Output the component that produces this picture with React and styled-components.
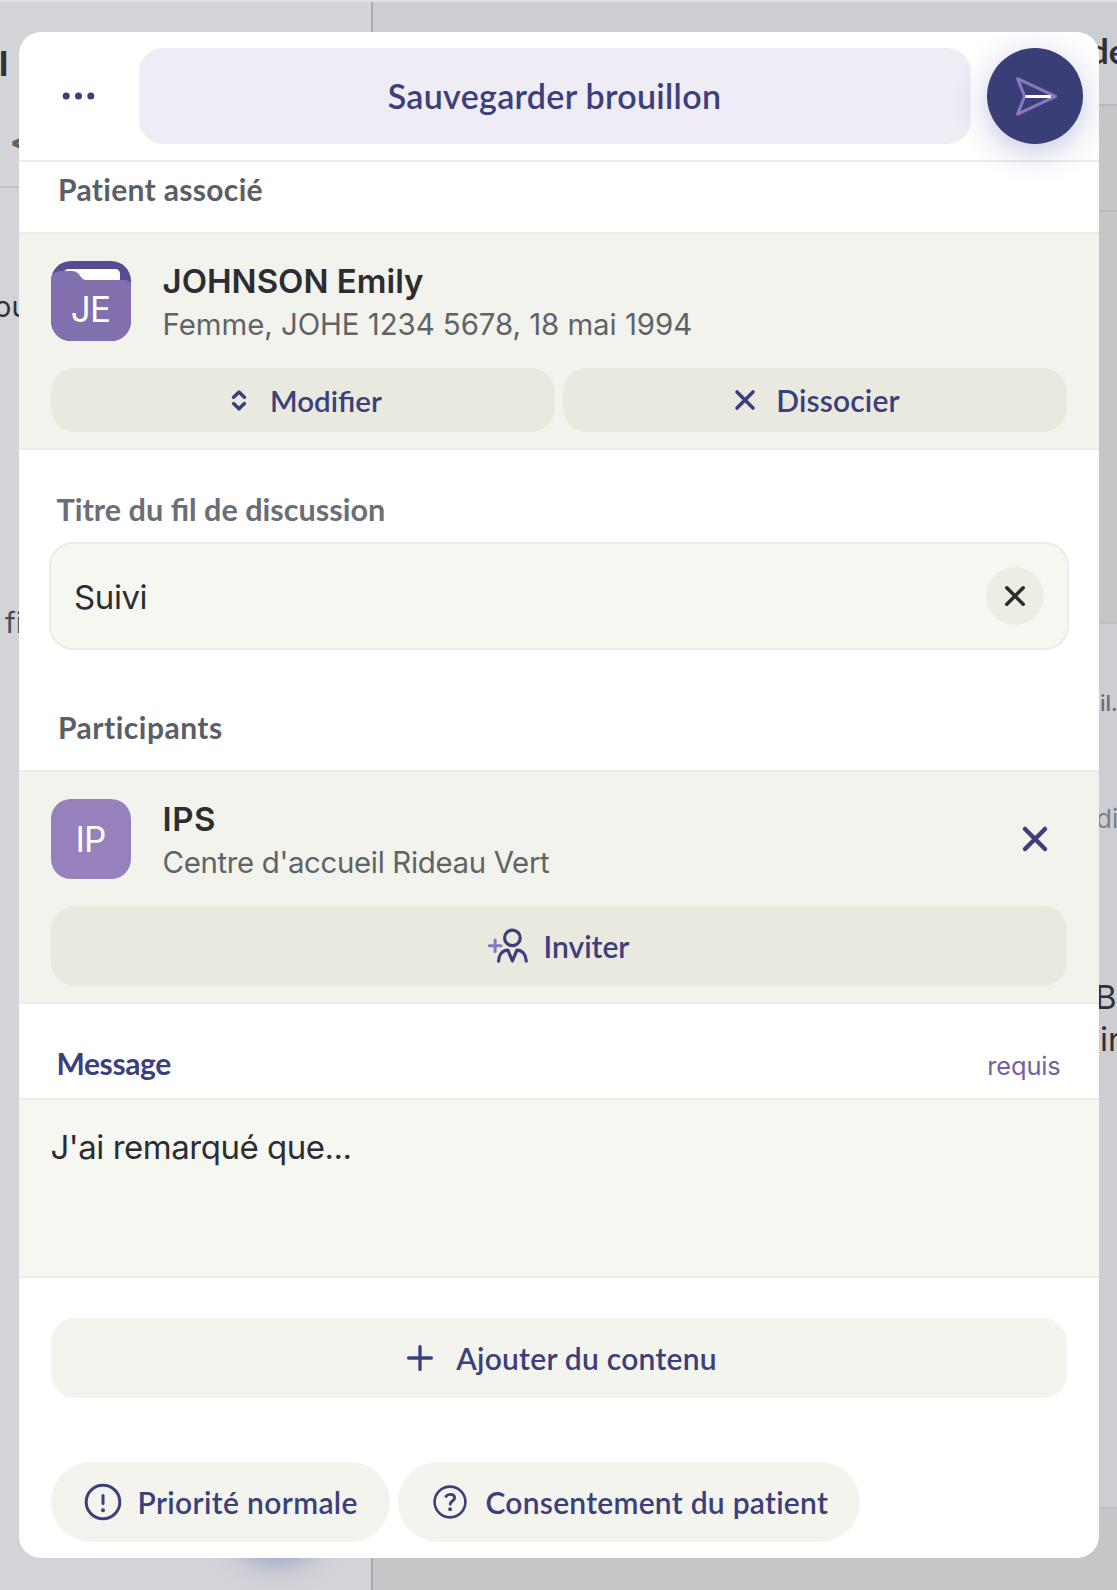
import React from "react";
import styled, { createGlobalStyle } from "styled-components";

const DISPLAY = `Lato, "Open Sans", sans-serif`;
const BODY = `Inter, "Liberation Sans", sans-serif`;

const C = {
  navy: "#3b3f7b",
  violet: "#8b77c0",
  ink: "#2c2d30",
  grey: "#5f6368",
  label: "#5a5e66",
  line: "#ebece6",
  band: "#f2f3ec",
  field: "#f6f7f1",
  button: "#e9e9e0",
  soft: "#f3f4ee",
};

const GlobalStyle = createGlobalStyle`
  *, *::before, *::after { box-sizing: border-box; }
  html, body { margin: 0; padding: 0; }
  body { background: #d3d4d8; font-family: ${BODY}; }
  button { border: 0; margin: 0; padding: 0; background: none; font: inherit; color: inherit; }
  svg { display: block; flex: none; }
`;

/* ---------- dimmed page behind the dialog ---------- */

const Screen = styled.div`
  position: relative;
  width: 1117px;
  height: 1590px;
  overflow: hidden;
`;

const Backdrop = styled.div`
  display: grid;
  grid-template-columns: 373px 1fr;
  height: 100%;
  border-top: 2px solid #dfe0df;
  background: #d3d4d8;
`;

const ListPane = styled.div`
  position: relative;
  min-width: 0;
  overflow: hidden;
  display: flex;
  flex-direction: column;
  border-right: 2px solid #a9abb0;
`;

const DetailPane = styled.div`
  min-width: 0;
  overflow: hidden;
  display: flex;
  flex-direction: column;
  background: #c5c7c6;
`;

const PaneBlock = styled.div`
  flex: none;
  height: ${(p) => p.$h}px;
  background: ${(p) => p.$bg || "transparent"};
  border-bottom: ${(p) => (p.$line ? `2px solid ${p.$line}` : "0")};
  overflow: hidden;
`;

const PaneText = styled.div`
  font-family: ${(p) => p.$font || BODY};
  font-size: ${(p) => p.$size}px;
  font-weight: ${(p) => p.$weight || 400};
  line-height: 40px;
  color: ${(p) => p.$color || "#303136"};
  padding-top: ${(p) => p.$top}px;
  text-indent: ${(p) => p.$indent}px;
  white-space: nowrap;
`;

const Fab = styled.div`
  position: absolute;
  left: 229px;
  bottom: 41px;
  width: 96px;
  height: 96px;
  border-radius: 50%;
  background: #32366a;
  box-shadow: 0 8px 32px rgba(62, 72, 165, 0.6);
`;

/* ---------- dialog ---------- */

const Dialog = styled.section`
  position: absolute;
  left: 18.5px;
  top: 32px;
  width: 1080px;
  height: 1526px;
  border-radius: 22px;
  overflow: hidden;
  background: #fff;
  display: flex;
  flex-direction: column;
`;

const Header = styled.header`
  flex: none;
  display: flex;
  gap: 16px;
  height: 130px;
  padding: 16px;
  border-bottom: 2px solid ${C.line};
`;

const MenuButton = styled.button`
  width: 88px;
  height: 96px;
  display: grid;
  place-items: center;
`;

const SaveButton = styled.button`
  flex: 1;
  height: 96px;
  border-radius: 24px;
  background: #efecf6;
  color: ${C.navy};
  font: 600 34px/96px ${DISPLAY};
  letter-spacing: 0.3px;
`;

const SendButton = styled.button`
  position: relative;
  width: 96px;
  height: 96px;
  border-radius: 50%;
  background: #393f76;
  display: grid;
  place-items: center;
  box-shadow: 0 8px 32px rgba(66, 70, 150, 0.3);
`;

const SectionTitle = styled.h2`
  flex: none;
  margin: 0;
  height: ${(p) => p.$h}px;
  padding: ${(p) => p.$top}px 0 0 ${(p) => p.$left || 39.5}px;
  font-family: ${DISPLAY};
  font-weight: 700;
  font-size: ${(p) => p.$size || 30}px;
  line-height: 36px;
  letter-spacing: ${(p) => p.$track || 0}px;
  color: ${(p) => p.$color || C.label};
`;

const Band = styled.div`
  flex: none;
  display: flex;
  flex-direction: column;
  gap: 27px;
  padding: 27px 32px 16px;
  background: ${C.band};
  border: solid ${C.line};
  border-width: 2px 0;
`;

const Person = styled.div`
  display: flex;
  gap: 32px;
  height: 80px;
`;

const PersonText = styled.div`
  flex: 1;
  margin-top: -2px;
  white-space: nowrap;
`;

const Name = styled.div`
  font-weight: 600;
  font-size: 33px;
  line-height: 44px;
  letter-spacing: ${(p) => p.$track || 0}px;
  color: ${C.ink};
`;

const Detail = styled.div`
  font-size: 29.4px;
  line-height: 44px;
  letter-spacing: ${(p) => p.$track || 0}px;
  color: ${C.grey};
`;

const Avatar = styled.div`
  display: grid;
  flex: none;
  width: 80px;
  height: 80px;
  border-radius: 20px;
  overflow: hidden;
  background: ${(p) => p.$bg};
  > * { grid-area: 1 / 1; }
`;

const Initials = styled.span`
  padding-top: ${(p) => p.$drop || 0}px;
  font-size: 35px;
  line-height: 80px;
  letter-spacing: -0.8px;
  text-align: center;
  color: #fff;
`;

const RemoveButton = styled.button`
  width: 64px;
  height: 80px;
  display: grid;
  place-items: center;
`;

const ButtonRow = styled.div`
  display: flex;
  gap: 8px;
`;

const ActionButton = styled.button`
  flex: 1;
  display: flex;
  align-items: center;
  justify-content: center;
  gap: ${(p) => p.$gap || 16}px;
  height: ${(p) => p.$h || 80}px;
  border-radius: 24px;
  background: ${(p) => p.$bg || C.button};
  color: ${C.navy};
  font-family: ${DISPLAY};
  font-weight: 600;
  font-size: ${(p) => p.$size || 30}px;
  letter-spacing: ${(p) => p.$track || 0}px;
  white-space: nowrap;
`;

const Field = styled.div`
  flex: none;
  display: flex;
  align-items: center;
  justify-content: space-between;
  height: 108px;
  margin: 0 30px;
  padding: 1px 23px 0 23.5px;
  border: 2px solid ${C.line};
  border-radius: 24px;
  background: ${C.field};
  font-size: 33px;
  letter-spacing: -0.4px;
  color: ${C.ink};
`;

const ClearButton = styled.button`
  width: 58px;
  height: 58px;
  margin-top: -1px;
  border-radius: 50%;
  background: #edede4;
  display: grid;
  place-items: center;
`;

const MessageHeader = styled.div`
  flex: none;
  display: flex;
  align-items: baseline;
  justify-content: space-between;
  height: 94px;
  padding-right: 38px;
`;

const Required = styled.span`
  font-size: 25.4px;
  letter-spacing: -0.15px;
  color: #74609f;
`;

const MessageBody = styled.div`
  flex: none;
  height: 180px;
  padding: 25px 32px;
  border: solid ${C.line};
  border-width: 2px 0;
  background: ${C.field};
  font-size: 33px;
  line-height: 44px;
  letter-spacing: -0.48px;
  color: ${C.ink};
`;

const Footer = styled.footer`
  display: flex;
  flex-direction: column;
  gap: 64px;
  padding: 40px 32px 16px;
`;

const Pill = styled.button`
  display: flex;
  align-items: center;
  gap: ${(p) => p.$gap || 15}px;
  width: ${(p) => p.$w}px;
  height: 80px;
  padding-left: 32px;
  border-radius: 40px;
  background: ${C.soft};
  color: ${C.navy};
  font-family: ${DISPLAY};
  font-weight: 600;
  font-size: 30px;
  letter-spacing: ${(p) => p.$track}px;
  white-space: nowrap;
`;

/* ---------- icons ---------- */

const Cross = ({ size = 32, arm, width = 3.6, color = C.navy }) => {
  const a = size / 2 - arm;
  const b = size / 2 + arm;
  return (
    <svg width={size} height={size} stroke={color} strokeWidth={width} strokeLinecap="round">
      <path d={`M${a} ${a}L${b} ${b}M${b} ${a}L${a} ${b}`} />
    </svg>
  );
};

const Dots = () => (
  <svg width="40" height="40" fill={C.navy}>
    <circle cx="7.2" cy="20" r="3.5" />
    <circle cx="19.5" cy="20" r="3.5" />
    <circle cx="31.8" cy="20" r="3.5" />
  </svg>
);

const SendIcon = () => (
  <svg width="48" height="48" fill="none" strokeWidth="3" strokeLinejoin="round">
    <path d="M6.6 6.6L44.6 24.4L6.6 42.2L13.6 24.4Z" stroke={C.violet} />
    <path d="M14.5 24.4H40" stroke="#fff" />
  </svg>
);

const Chevrons = () => (
  <svg width="32" height="32" fill="none" stroke={C.navy} strokeWidth="3.5" strokeLinecap="round" strokeLinejoin="round">
    <path d="M10.6 13.2L16 8L21.4 13.2M10.6 19.6L16 24.8L21.4 19.6" />
  </svg>
);

const InviteIcon = () => (
  <svg width="40" height="40" fill="none" strokeWidth="3.2" strokeLinecap="round" strokeLinejoin="round">
    <path d="M1.2 19.8H13M7.1 14V25.6" stroke={C.violet} strokeWidth="3" />
    <circle cx="24.4" cy="11.9" r="7.8" stroke={C.navy} />
    <path d="M10.5 35.2C10.8 29 14 24.4 19.9 24.2L24.4 35L28.9 24.2C34.8 24.4 38 29 38.3 35.2" stroke={C.navy} />
  </svg>
);

const Plus = () => (
  <svg width="40" height="40" stroke={C.navy} strokeWidth="3.3" strokeLinecap="round">
    <path d="M8.6 20H31.4M20 8.6V31.4" />
  </svg>
);

const AlertIcon = () => (
  <svg width="40" height="40" fill="none" stroke={C.navy} strokeWidth="3" strokeLinecap="round">
    <circle cx="20" cy="20" r="16.8" />
    <path d="M20 13.4V21.4" />
    <circle cx="20" cy="28.3" r="2" fill={C.navy} stroke="none" />
  </svg>
);

const HelpIcon = () => (
  <svg width="40" height="40" fill="none" stroke={C.navy} strokeWidth="2.6" strokeLinecap="round" strokeLinejoin="round">
    <circle cx="20" cy="20" r="15.4" />
    <path d="M16 14.4C17 12.9 18.5 12.4 20.2 12.4C22.8 12.4 24.6 13.8 24.6 16C24.6 19.2 20.4 18.8 20.2 22.2" strokeWidth="2.9" />
    <circle cx="20.1" cy="27.2" r="1.9" fill={C.navy} stroke="none" />
  </svg>
);

const FolderShape = () => (
  <svg width="80" height="80">
    <path d="M12 13Q13 8 18 8H64Q69 8 69 13V24H12Z" fill="#fff" />
    <path d="M0 20Q0 10 10 10H20C24.5 10 26.5 11.5 28.5 14C31 17.5 32 19 36 19H74Q80 19 80 25V80H0Z" fill="#8270ae" />
  </svg>
);

export default function App() {
  return (
    <Screen>
      <GlobalStyle />
      <Backdrop>
        <ListPane>
          <PaneBlock $h={186} $line="#c1c2c6">
            <PaneText $size={34} $weight={700} $top={42} $indent={-1}>l</PaneText>
            <PaneText $size={30} $weight={800} $top={37} $indent={10} $color="#5f6268">&lt;</PaneText>
          </PaneBlock>
          <PaneBlock $h={1000}>
            <PaneText $size={29} $top={99} $indent={-6}>ou</PaneText>
            <PaneText $size={29} $top={276} $indent={5} $color="#4b4c52">fi</PaneText>
          </PaneBlock>
          <Fab />
        </ListPane>
        <DetailPane>
          <PaneBlock $h={104} $bg="#cdced4" $line="#b8b9ba">
            <PaneText $size={34} $weight={700} $font={DISPLAY} $top={29} $indent={716.5}>de</PaneText>
          </PaneBlock>
          <PaneBlock $h={106} $line="#b8b9ba" />
          <PaneBlock $h={412} $line="#bfc0c2" />
          <PaneBlock $h={885} $bg="#cdced4" $line="#bfc0c2">
            <PaneText $size={22} $weight={500} $top={59} $indent={714.5} $color="#6a6b74">ail.</PaneText>
            <PaneText $size={26} $top={76} $indent={723} $color="#7e7f87">di</PaneText>
            <PaneText $size={33} $top={138} $indent={722}>B</PaneText>
            <PaneText $size={33} $top={2} $indent={727}>in</PaneText>
          </PaneBlock>
        </DetailPane>
      </Backdrop>

      <Dialog>
        <Header>
          <MenuButton><Dots /></MenuButton>
          <SaveButton>Sauvegarder brouillon</SaveButton>
          <SendButton><SendIcon /></SendButton>
        </Header>

        <SectionTitle $h={70} $top={9} $track={0.33}>Patient associé</SectionTitle>
        <Band>
          <Person>
            <Avatar $bg="#584c92">
              <FolderShape />
              <Initials $drop={8}>JE</Initials>
            </Avatar>
            <PersonText>
              <Name>JOHNSON Emily</Name>
              <Detail $track={-0.04}>Femme, JOHE 1234 5678, 18 mai 1994</Detail>
            </PersonText>
          </Person>
          <ButtonRow>
            <ActionButton $h={64} $gap={15} $size={29.5}><Chevrons />Modifier</ActionButton>
            <ActionButton $h={64} $gap={15} $track={0.16}><Cross arm={8} />Dissocier</ActionButton>
          </ButtonRow>
        </Band>

        <SectionTitle $h={92} $top={42} $left={38} $size={30.6} $color="#6a6e76">Titre du fil de discussion</SectionTitle>
        <Field>
          Suivi
          <ClearButton><Cross arm={8.2} color="#2c2d30" /></ClearButton>
        </Field>

        <SectionTitle $h={120} $top={59} $track={0.5}>Participants</SectionTitle>
        <Band>
          <Person>
            <Avatar $bg="#9781bd"><Initials>IP</Initials></Avatar>
            <PersonText>
              <Name $track={0.5}>IPS</Name>
              <Detail $track={-0.33}>Centre d'accueil Rideau Vert</Detail>
            </PersonText>
            <RemoveButton><Cross arm={10} width={4.5} /></RemoveButton>
          </Person>
          <ButtonRow>
            <ActionButton><InviteIcon />Inviter</ActionButton>
          </ButtonRow>
        </Band>

        <MessageHeader>
          <SectionTitle $h={94} $top={41} $left={38} $track={-0.4} $color={C.navy}>Message</SectionTitle>
          <Required>requis</Required>
        </MessageHeader>
        <MessageBody>J'ai remarqué que...</MessageBody>

        <Footer>
          <ButtonRow>
            <ActionButton $bg={C.soft} $track={0.25}><Plus />Ajouter du contenu</ActionButton>
          </ButtonRow>
          <ButtonRow>
            <Pill $w={339} $track={0.35}><AlertIcon />Priorité normale</Pill>
            <Pill $w={462} $gap={16} $track={0.25}><HelpIcon />Consentement du patient</Pill>
          </ButtonRow>
        </Footer>
      </Dialog>
    </Screen>
  );
}
